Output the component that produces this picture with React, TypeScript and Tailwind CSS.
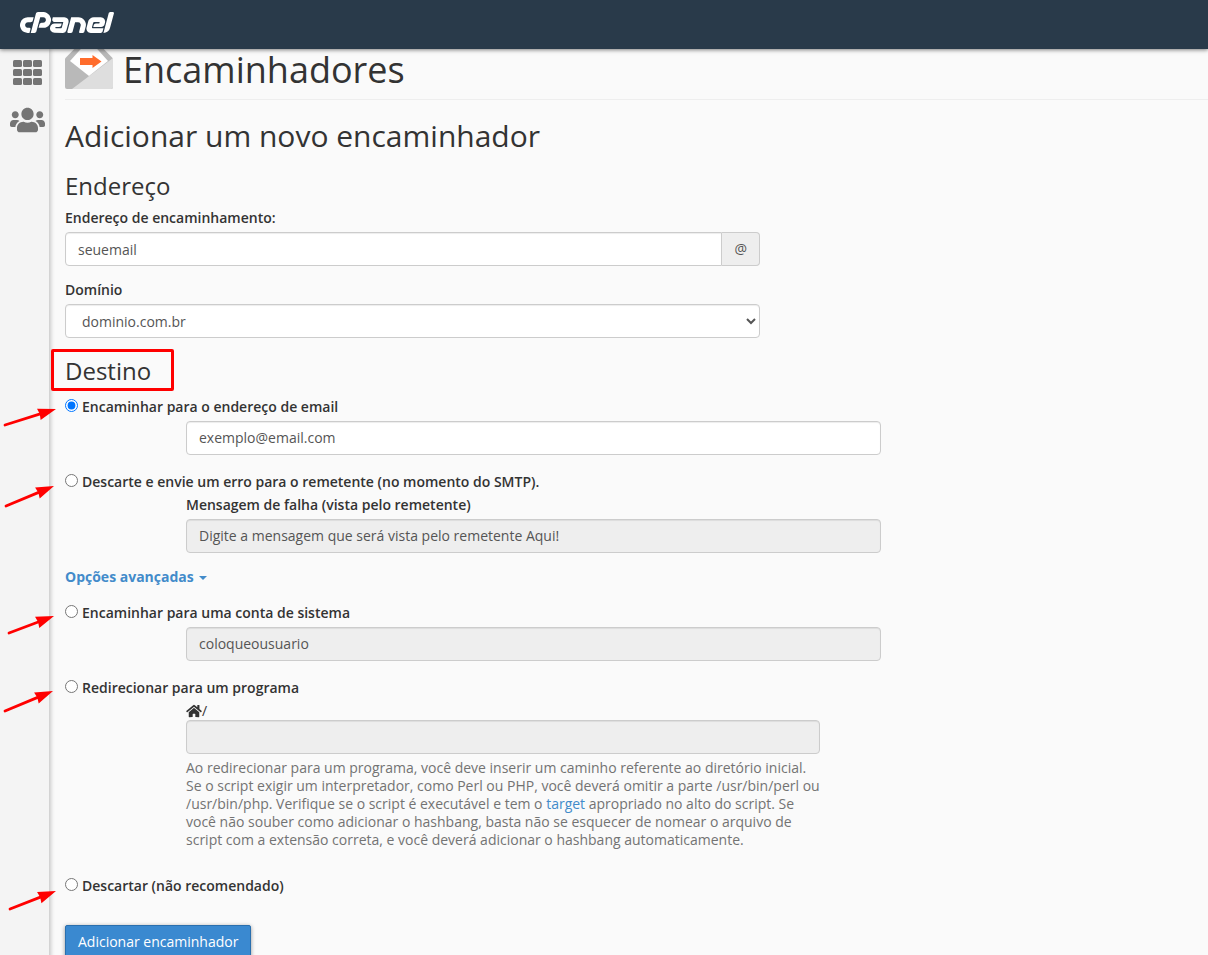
import { useState, type ReactNode } from 'react';
import { FaHome, FaUsers } from 'react-icons/fa';
import { SiCpanel } from 'react-icons/si';

type Point = [number, number];

const inputClass =
  "block h-[34px] w-full rounded-[4px] border border-[#ccc] bg-white px-3 text-sm text-[#555] shadow-[inset_0_1px_1px_rgba(0,0,0,0.075)] disabled:bg-[#eee] disabled:opacity-100";

function Arrow({ from, to }: { from: Point; to: Point }) {
  const dx = to[0] - from[0];
  const dy = to[1] - from[1];
  const len = Math.hypot(dx, dy);
  const angle = (Math.atan2(dy, dx) * 180) / Math.PI;

  return (
    <svg className="pointer-events-none absolute top-0 -left-16 h-10 w-16" viewBox="0 0 64 40" fill="#f00" aria-hidden="true">
      <g transform={`translate(${from[0]} ${from[1]}) rotate(${angle})`}>
        <path d={`M0 0H${len - 14}`} stroke="#f00" strokeWidth="2.8" strokeLinecap="round" />
        <path d={`M${len} 0L${len - 18} 6L${len - 17} 0L${len - 18} -6Z`} />
      </g>
    </svg>
  );
}

function EnvelopeIcon() {
  return (
    <svg className="h-12 w-12 shrink-0" viewBox="0 0 48 48" aria-hidden="true">
      <path d="M0 17.5L17 0H31L48 17.5V46Q48 48 46 48H2Q0 48 0 46Z" fill="#b9b9b9" />
      <path d="M48 17V46Q48 48 46 48H7Z" fill="#dedede" />
      <path d="M5 20L23 0H25L43 20L24 35Z" fill="#fff" />
      <path d="M15 17H27.5V14L36.5 20.5L27.5 27V24H15Z" fill="#ff6c2c" />
    </svg>
  );
}

function GridIcon() {
  return (
    <svg className="h-[25px] w-[29px]" viewBox="0 0 29 25" fill="#757575" aria-hidden="true">
      {[0, 9, 18].map((y) =>
        [0, 10, 20].map((x) => <rect key={`${x}-${y}`} x={x} y={y} width="9" height="7" rx="1.5" />),
      )}
    </svg>
  );
}

interface OptionProps {
  id: string;
  label: string;
  selected: string;
  onSelect: (id: string) => void;
  arrow: { from: Point; to: Point };
  children?: ReactNode;
}

function Option({ id, label, selected, onSelect, arrow, children }: OptionProps) {
  return (
    <div className="relative">
      <Arrow from={arrow.from} to={arrow.to} />
      <div className="flex items-start gap-1">
        <input
          type="radio"
          id={id}
          name="destination"
          className="m-0 mt-px h-[13px] w-[13px]"
          checked={selected === id}
          onChange={() => onSelect(id)}
        />
        <label htmlFor={id} className="font-semibold">
          {label}
        </label>
      </div>
      {children && <div className="mt-[5px] ml-[121px]">{children}</div>}
    </div>
  );
}

export default function App() {
  const [selected, setSelected] = useState('email');

  return (
    <div className="flex min-h-screen flex-col bg-[#fafafa] font-['Open_Sans',sans-serif] text-sm leading-[18px] text-[#333]">
      <header className="sticky top-0 z-10 flex h-[49px] items-center bg-[#293a4a] px-5 pb-1 shadow-[0_1px_4px_rgba(0,0,0,0.5)]">
        <a href="#" aria-label="cPanel" className="text-white">
          <SiCpanel className="h-[21px] w-[94px]" viewBox="0 9.4 24 5.2" />
        </a>
      </header>

      <div className="flex flex-1">
        <nav className="flex w-[49px] shrink-0 flex-col items-center gap-[21px] bg-[#f4f4f4] pt-[11px] pl-[6px] shadow-[2px_0_4px_rgba(0,0,0,0.2)]">
          <a href="#" aria-label="Home">
            <GridIcon />
          </a>
          <a href="#" aria-label="Usuários" className="text-[#757575]">
            <FaUsers className="h-7 w-[35px]" />
          </a>
        </nav>

        <main className="relative -mt-2 min-w-0 flex-1 pb-10 pl-4">
          <div className="flex items-end gap-[10px] border-b border-[#eee] pb-[10px]">
            <EnvelopeIcon />
            <h1 className="text-[36px] leading-[38px]">Encaminhadores</h1>
          </div>

          <h2 className="mt-[19px] text-[30px] leading-[33px]">Adicionar um novo encaminhador</h2>

          <form onSubmit={(e) => e.preventDefault()}>
            <h3 className="mt-[21px] text-2xl leading-[26px]">Endereço</h3>

            <div className="mt-[10px] max-w-[695px]">
              <label htmlFor="address" className="mb-[5px] block font-semibold">
                Endereço de encaminhamento:
              </label>
              <div className="flex">
                <input id="address" type="text" defaultValue="seuemail" className={`${inputClass} rounded-r-none`} />
                <span className="flex items-center rounded-r-[4px] border border-l-0 border-[#ccc] bg-[#eee] px-3 text-[#555]">
                  @
                </span>
              </div>
            </div>

            <div className="mt-[15px] max-w-[695px]">
              <label htmlFor="domain" className="mb-[5px] block font-semibold">
                Domínio
              </label>
              <select id="domain" className={inputClass}>
                <option>dominio.com.br</option>
              </select>
            </div>

            <h3 className="relative mt-5 text-2xl leading-[26px]">
              Destino
              <span className="absolute -top-[9px] -left-[14px] h-[42px] w-[123px] rounded-xs border-3 border-[#f00]" />
            </h3>

            <div className="mt-[14px] flex flex-col gap-[18px]">
              <Option
                id="email"
                label="Encaminhar para o endereço de email"
                selected={selected}
                onSelect={setSelected}
                arrow={{ from: [4, 27], to: [55, 11] }}
              >
                <input
                  type="text"
                  aria-label="Endereço de email"
                  defaultValue="exemplo@email.com"
                  disabled={selected !== 'email'}
                  className={`${inputClass} max-w-[695px] pb-[2px]`}
                />
              </Option>

              <Option
                id="fail"
                label="Descarte e envie um erro para o remetente (no momento do SMTP)."
                selected={selected}
                onSelect={setSelected}
                arrow={{ from: [5, 33], to: [53, 13] }}
              >
                <label htmlFor="fail-message" className="mb-[5px] block font-semibold">
                  Mensagem de falha (vista pelo remetente)
                </label>
                <input
                  id="fail-message"
                  type="text"
                  defaultValue="Digite a mensagem que será vista pelo remetente Aqui!"
                  disabled={selected !== 'fail'}
                  className={`${inputClass} max-w-[695px] pb-[2px]`}
                />
              </Option>
            </div>

            <button type="button" className="mt-[15px] flex items-center gap-[5px] font-bold text-[#428bca]">
              Opções avançadas
              <span className="mt-[2px] border-x-4 border-t-4 border-x-transparent border-t-current" />
            </button>

            <div className="mt-[18px] flex flex-col gap-[18px]">
              <Option
                id="system"
                label="Encaminhar para uma conta de sistema"
                selected={selected}
                onSelect={setSelected}
                arrow={{ from: [8, 29], to: [53, 12] }}
              >
                <input
                  type="text"
                  aria-label="Conta de sistema"
                  defaultValue="coloqueousuario"
                  disabled={selected !== 'system'}
                  className={`${inputClass} max-w-[695px] pb-[2px]`}
                />
              </Option>

              <Option
                id="program"
                label="Redirecionar para um programa"
                selected={selected}
                onSelect={setSelected}
                arrow={{ from: [4, 32], to: [52, 12] }}
              >
                <div className="max-w-[634px]">
                  <label htmlFor="program-path" className="flex items-center">
                    <FaHome className="h-[14px] w-4" />/
                  </label>
                  <input id="program-path" type="text" disabled={selected !== 'program'} className={inputClass} />
                  <p className="mt-[5px] text-[#737373]">
                    Ao redirecionar para um programa, você deve inserir um caminho referente ao diretório inicial. Se o
                    script exigir um interpretador, como Perl ou PHP, você deverá omitir a parte /usr/bin/perl ou
                    /usr/bin/php. Verifique se o script é executável e tem o{' '}
                    <a href="#" className="text-[#428bca]">
                      target
                    </a>{' '}
                    apropriado no alto do script. Se você não souber como adicionar o hashbang, basta não se esquecer
                    de nomear o arquivo de script com a extensão correta, e você deverá adicionar o hashbang
                    automaticamente.
                  </p>
                </div>
              </Option>
            </div>

            <div className="mt-7">
              <Option
                id="discard"
                label="Descartar (não recomendado)"
                selected={selected}
                onSelect={setSelected}
                arrow={{ from: [9, 32], to: [55, 14] }}
              />
            </div>

            <button
              type="submit"
              className="mt-[30px] h-[34px] rounded-xs border border-[#2a6fae] bg-[#3a89d0] px-3 text-white shadow-[0_1px_4px_rgba(0,0,0,0.4)]"
            >
              Adicionar encaminhador
            </button>
          </form>
        </main>
      </div>
    </div>
  );
}
